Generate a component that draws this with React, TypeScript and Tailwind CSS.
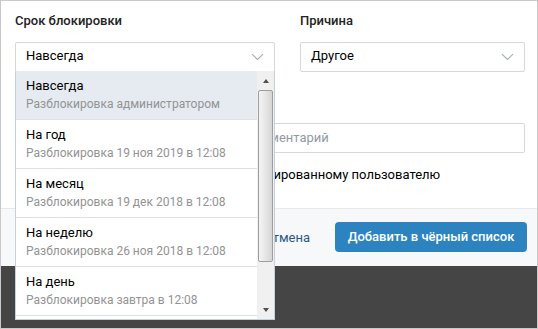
const options = [
    { title: "Навсегда", sub: "Разблокировка администратором" },
    { title: "На год", sub: "Разблокировка 19 ноя 2019 в 12:08" },
    { title: "На месяц", sub: "Разблокировка 19 дек 2018 в 12:08" },
    { title: "На неделю", sub: "Разблокировка 26 ноя 2018 в 12:08" },
    { title: "На день", sub: "Разблокировка завтра в 12:08" },
];

const Chevron = () => (
    <svg width="13" height="8" viewBox="0 0 13 8" fill="none">
        <path d="M1 1.2 L6.5 6.5 L12 1.2" stroke="#a3adb9" strokeWidth="1.1" />
    </svg>
);

const Select = ({ value }: { value: string }) => (
    <div className="h-[30px] border border-[#d3d9de] rounded-[2px] bg-white flex items-center justify-between pl-[10px] pr-[10px] text-[13px] text-black">
        <span className="-mt-[2px]">{value}</span>
        <Chevron />
    </div>
);

const App = () => {
    return (
        <div className="w-[538px] h-[329px] border border-[#c9c9c9] bg-[#454545] relative overflow-hidden" style={{ fontFamily: "Roboto, 'Liberation Sans', sans-serif" }}>
            {/* Dialog body */}
            <div className="bg-white pl-[14px] pr-[12px] pt-[12px] h-[207px]">
                <div className="flex gap-[25px]">
                    <div className="w-[260px]">
                        <p className="text-[13px] font-medium text-[#222] leading-[16px] mb-[13px]">Срок блокировки</p>
                        <Select value="Навсегда" />
                    </div>
                    <div className="w-[225px]">
                        <p className="text-[13px] font-medium text-[#222] leading-[16px] mb-[13px]">Причина</p>
                        <Select value="Другое" />
                    </div>
                </div>
                <div className="mt-[51px] ml-[214px] h-[30px] border border-[#d3d9de] rounded-[2px] flex items-center pl-[14px] text-[13px] text-[#939aa3]">
                    <span className="-mt-[1px]">Комментарий</span>
                </div>
                <div className="mt-[12px] ml-[40px] flex items-center gap-[9px] text-[13px] text-black">
                    <div className="w-[15px] h-[15px] border border-[#c1c9d1] rounded-[2px]" />
                    <span>Сообщить о блокировке заблокированному пользователю</span>
                </div>
            </div>

            {/* Footer */}
            <div className="bg-[#f7f8fa] border-t border-[#e7e8ec] h-[58px] flex items-center justify-end gap-[25px] pr-[10px]">
                <span className="text-[13px] text-[#2a5885]">Отмена</span>
                <button className="h-[30px] w-[192px] rounded-[4px] bg-[#2d83bf] text-white text-[13px] font-medium -mt-[2px]">
                    Добавить в чёрный список
                </button>
            </div>

            {/* Dropdown menu */}
            <div className="absolute left-[14px] top-[70px] w-[260px] h-[249px] border border-[#c5d0db] border-t-0 bg-white flex">
                <div className="flex-1 overflow-hidden">
                    {options.map((o, i) => (
                        <div key={i} className={`h-[49px] border-b border-[#dce1e6] pl-[10px] pt-[7px] ${i === 0 ? "bg-[#e5ebf1]" : "bg-white"}`}>
                            <p className="text-[13px] leading-[16px] text-black">{o.title}</p>
                            <p className="text-[12px] leading-[16px] mt-[2px] text-[#939393]">{o.sub}</p>
                        </div>
                    ))}
                </div>
                {/* scrollbar */}
                <div className="w-[17px] bg-[#f0f0f0] flex flex-col items-center">
                    <div className="h-[19px] flex items-center justify-center">
                        <div className="w-0 h-0 border-l-[3px] border-r-[3px] border-b-[4px] border-l-transparent border-r-transparent border-b-[#505050]" />
                    </div>
                    <div className="w-[15px] h-[172px] rounded-[2px] border border-[#9e9e9e] bg-gradient-to-r from-[#f4f4f4] via-[#e6e6e6] to-[#d6d6d6]" />
                    <div className="flex-1" />
                    <div className="h-[18px] flex items-center justify-center">
                        <div className="w-0 h-0 border-l-[3px] border-r-[3px] border-t-[4px] border-l-transparent border-r-transparent border-t-[#505050]" />
                    </div>
                </div>
            </div>
        </div>
    );
};

export default App;
